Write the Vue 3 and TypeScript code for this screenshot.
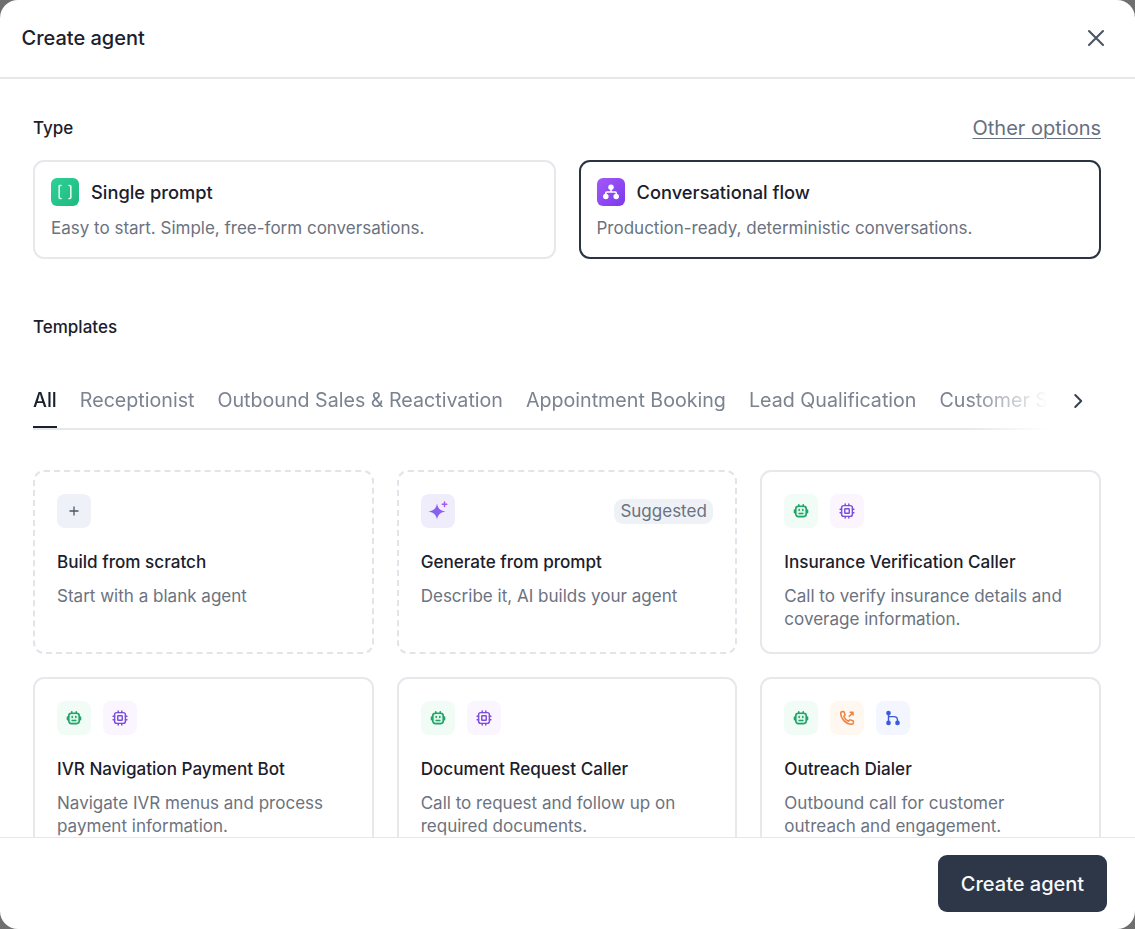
<script setup lang="ts">
type IconName = "plus" | "spark" | "bot" | "chip" | "phone" | "branch";

interface Template {
  title: string;
  description: string;
  icons: IconName[];
  dashed?: boolean;
  badge?: string;
}

const tabs: string[] = [
  "All",
  "Receptionist",
  "Outbound Sales & Reactivation",
  "Appointment Booking",
  "Lead Qualification",
  "Customer Support",
];

const templates: Template[] = [
  { title: "Build from scratch", description: "Start with a blank agent", icons: ["plus"], dashed: true },
  { title: "Generate from prompt", description: "Describe it, AI builds your agent", icons: ["spark"], dashed: true, badge: "Suggested" },
  { title: "Insurance Verification Caller", description: "Call to verify insurance details and coverage information.", icons: ["bot", "chip"] },
  { title: "IVR Navigation Payment Bot", description: "Navigate IVR menus and process payment information.", icons: ["bot", "chip"] },
  { title: "Document Request Caller", description: "Call to request and follow up on required documents.", icons: ["bot", "chip"] },
  { title: "Outreach Dialer", description: "Outbound call for customer outreach and engagement.", icons: ["bot", "phone", "branch"] },
];
</script>

<template>
  <div class="modal">
    <header class="modal_header">
      <h1>Create agent</h1>
      <svg class="close_icon" viewBox="0 0 24 24" fill="none" stroke="#4b5563" stroke-width="2.1" stroke-linecap="round">
        <path d="M5 5l14 14M19 5L5 19" />
      </svg>
    </header>

    <main class="modal_body">
      <div class="type_head">
        <span class="section_label">Type</span>
        <a class="other_options">Other options</a>
      </div>

      <div class="type_grid">
        <div class="type_card">
          <div class="type_title">
            <span class="type_icon green">
              <svg viewBox="0 0 20 20" fill="none" stroke="#e6fbf3" stroke-width="1.4" stroke-linecap="round" stroke-linejoin="round">
                <path d="M6.4 4H5.600q-.9 0-.9.9v10.200q0 .9.9.9h.8M13.600 4h.8q.9 0 .9.9v10.200q0 .9-.9.9h-.8" />
              </svg>
            </span>
            Single prompt
          </div>
          <p>Easy to start. Simple, free-form conversations.</p>
        </div>
        <div class="type_card selected">
          <div class="type_title">
            <span class="type_icon purple">
              <svg viewBox="0 0 20 20" fill="#ffffff" stroke="none">
                <circle cx="10" cy="5.600" r="2.500" />
                <circle cx="5.300" cy="14.200" r="2.500" />
                <circle cx="14.700" cy="14.200" r="2.500" />
                <path d="M9.300 7h1.400v2.400h3.100a1.700 1.700 0 0 1 1.700 1.700V13h-1.400v-1.900a.4.4 0 0 0-.4-.4H6.300a.4.4 0 0 0-.4.4V13H4.500v-1.900a1.700 1.700 0 0 1 1.700-1.700h3.100z" />
              </svg>
            </span>
            Conversational flow
          </div>
          <p>Production-ready, deterministic conversations.</p>
        </div>
      </div>

      <div class="section_label templates_label">Templates</div>

      <div class="tabs_row">
        <div class="tabs">
          <span v-for="(tab, i) in tabs" :key="tab" class="tab" :class="{ active: i === 0 }">{{ tab }}</span>
        </div>
        <svg class="tabs_arrow" viewBox="0 0 24 24" fill="none" stroke="#374151" stroke-width="2.200" stroke-linecap="round" stroke-linejoin="round">
          <path d="M9 5.500l6.500 6.500L9 18.500" />
        </svg>
      </div>

      <div class="template_grid">
        <div v-for="item in templates" :key="item.title" class="template_card" :class="{ dashed: item.dashed }">
          <div class="template_top">
            <span v-for="icon in item.icons" :key="icon" class="tile" :class="`tile_${icon}`">
              <svg v-if="icon === 'plus'" viewBox="0 0 20 20" fill="none" stroke="#4b5563" stroke-width="1.400" stroke-linecap="round">
                <path d="M10 5.500v9M5.500 10h9" />
              </svg>
              <svg v-else-if="icon === 'spark'" class="big" viewBox="0 0 24 24">
                <defs>
                  <linearGradient id="spark_fill" x1="0" y1="1" x2="1" y2="0">
                    <stop offset="0" stop-color="#5b6cf0" />
                    <stop offset="1" stop-color="#b455f0" />
                  </linearGradient>
                </defs>
                <path fill="url(#spark_fill)" d="M11 4.500c.9 4.800 2.800 6.800 8.500 8-5.700 1.200-7.600 3.200-8.500 8-.9-4.800-2.800-6.800-8.500-8 5.700-1.200 7.600-3.200 8.500-8z" />
                <path fill="none" stroke="#a855f7" stroke-width="1.500" stroke-linecap="round" d="M18.500 3v4.500M16.300 5.200h4.500" />
              </svg>
              <svg v-else-if="icon === 'bot'" viewBox="0 0 20 20" fill="none" stroke="#22a36b" stroke-width="1.800" stroke-linecap="round" stroke-linejoin="round">
                <rect x="4.200" y="4.700" width="11.600" height="11.500" rx="2.800" fill="#d8f5e4" />
                <path d="M2.800 9v3M17.200 9v3M7.500 3v1.700M12.500 3v1.700M8 12.800h4" />
                <path d="M8 8.500v.8M12 8.500v.8" />
              </svg>
              <svg v-else-if="icon === 'chip'" viewBox="0 0 20 20" fill="none" stroke="#7c4ddb" stroke-width="1.600" stroke-linecap="round" stroke-linejoin="round">
                <rect x="4" y="4" width="12" height="12" rx="2.400" />
                <rect x="7.500" y="7.500" width="5" height="5" rx=".6" />
                <path d="M8 2.300v1.700M12 2.300v1.700M8 16v1.700M12 16v1.700M2.300 8H4M2.300 12H4M16 8h1.700M16 12h1.700" />
              </svg>
              <svg v-else-if="icon === 'phone'" viewBox="0 0 20 20" fill="none" stroke="#ef8445" stroke-width="1.700" stroke-linecap="round" stroke-linejoin="round">
                <path d="M3 4.500c0-.9.700-1.600 1.600-1.600h1.500c.4 0 .7.300.8.600l.9 2.800c.1.300 0 .6-.2.800L6.400 8.300c.9 2.300 2.900 4.300 5.300 5.300l1.200-1.300c.2-.2.500-.3.800-.2l2.800.9c.3.100.6.400.6.800v1.500c0 .9-.7 1.600-1.600 1.600C8.900 17 3 11 3 4.500z" />
                <path d="M12.500 8l4-4M13.500 3.500h3.200v3.200" />
              </svg>
              <svg v-else viewBox="0 0 20 20" fill="none" stroke="#3b5bdb" stroke-width="1.600" stroke-linecap="round" stroke-linejoin="round">
                <circle cx="5" cy="4.500" r="1.800" fill="#3b5bdb" />
                <circle cx="5" cy="15.500" r="1.800" fill="#3b5bdb" />
                <circle cx="15" cy="15.500" r="1.800" fill="#3b5bdb" />
                <path d="M5 6v8M5 8.500h6c2.200 0 4 1.600 4 4v1.500" />
              </svg>
            </span>
            <span v-if="item.badge" class="badge">{{ item.badge }}</span>
          </div>
          <h3>{{ item.title }}</h3>
          <p>{{ item.description }}</p>
        </div>
      </div>
    </main>

    <footer class="modal_footer">
      <button class="create_button">Create agent</button>
    </footer>
  </div>
</template>

<style>
body {
  background: #6f6f6f;
  overflow: hidden;
}
</style>

<style scoped>
.modal {
  display: flex;
  flex-direction: column;
  height: 929px;
  background: #ffffff;
  border-radius: 18px;
  overflow: hidden;
  font-family: Inter, "Noto Sans", sans-serif;
  color: #1a202c;
}

.modal_header {
  flex: none;
  display: flex;
  justify-content: space-between;
  align-items: center;
  height: 79px;
  box-sizing: border-box;
  padding: 0 27px 1px 21.500px;
  border-bottom: 2px solid #e5e7eb;
}

.modal_header h1 {
  margin: 0;
  font-size: 20px;
  font-weight: 450;
}

.close_icon {
  width: 24px;
  height: 24px;
}

.modal_body {
  flex: 1;
  min-height: 0;
  overflow: hidden;
  padding: 36px 34px 0 33px;
}

.type_head {
  display: flex;
  justify-content: space-between;
  align-items: center;
  height: 26px;
  margin-bottom: 19px;
}

.section_label {
  font-size: 17px;
  font-weight: 450;
}

.other_options {
  font-size: 20px;
  color: #667080;
  text-decoration: underline;
  text-decoration-thickness: 1px;
  text-underline-offset: 3px;
}

.type_grid {
  display: grid;
  grid-template-columns: 1fr 1fr;
  gap: 23px;
}

.type_card {
  height: 99px;
  box-sizing: border-box;
  padding: 16px;
  border: 2px solid #e6e8ec;
  border-radius: 11px;
}

.type_card.selected {
  border-color: #2a3340;
}

.type_title {
  display: flex;
  align-items: center;
  gap: 12px;
  height: 28px;
  font-size: 18.300px;
  font-weight: 450;
}

.type_icon {
  display: flex;
  align-items: center;
  justify-content: center;
  width: 28px;
  height: 28px;
  border-radius: 6px;
}

.type_icon svg {
  width: 22px;
  height: 22px;
}

.type_icon.green {
  background: linear-gradient(135deg, #2dd196, #1fb981);
}

.type_icon.purple {
  background: linear-gradient(135deg, #a259f5, #7c3aed);
}

.type_card p {
  margin: 11px 0 0;
  font-size: 17px;
  line-height: 23px;
  color: #6b7280;
}

.templates_label {
  margin-top: 56px;
  line-height: 24px;
}

.tabs_row {
  display: flex;
  align-items: flex-start;
  margin-top: 46px;
}

.tabs {
  display: flex;
  gap: 23px;
  width: 1015px;
  height: 45px;
  box-sizing: border-box;
  border-bottom: 2px solid #e5e7eb;
  overflow: hidden;
  white-space: nowrap;
  -webkit-mask-image: linear-gradient(to right, #000 92%, transparent 100%);
  mask-image: linear-gradient(to right, #000 92%, transparent 100%);
}

.tab {
  flex: none;
  height: 43px;
  box-sizing: border-box;
  padding-top: 1px;
  font-size: 19.650px;
  line-height: 28px;
  color: #7b8390;
}

.tab.active {
  color: #1a202c;
  font-weight: 450;
  border-bottom: 2px solid #1a202c;
}

.tabs_arrow {
  width: 22px;
  height: 22px;
  margin: 5px 0 0 19px;
}

.template_grid {
  display: grid;
  grid-template-columns: repeat(3, 1fr);
  grid-auto-rows: 184px;
  gap: 23px;
  margin-top: 40px;
}

.template_card {
  box-sizing: border-box;
  padding: 22px 22px 0;
  border: 2px solid #e6e8ec;
  border-radius: 11px;
}

.template_card.dashed {
  border: 2px dashed #e2e4e9;
}

.template_top {
  display: flex;
  align-items: center;
  gap: 12px;
  height: 34px;
}

.tile {
  display: flex;
  align-items: center;
  justify-content: center;
  width: 34px;
  height: 34px;
  border-radius: 8px;
}

.tile svg {
  width: 18px;
  height: 18px;
}

.tile svg.big {
  width: 24px;
  height: 24px;
}

.tile_plus { background: #eef1f8; }
.tile_spark { background: #efedfb; }
.tile_bot { background: #f2fcf6; }
.tile_chip { background: #faf5ff; }
.tile_phone { background: #fff8f1; }
.tile_branch { background: #f3f6fe; }

.badge {
  margin-left: auto;
  padding: 0 6.500px;
  height: 25px;
  border-radius: 9px;
  background: #eef1f6;
  color: #6b7280;
  font-size: 17px;
  line-height: 25px;
}

.template_card h3 {
  margin: 22px 0 0;
  font-size: 17.100px;
  line-height: 24px;
  font-weight: 450;
}

.template_card p {
  margin: 11px 0 0;
  font-size: 17.050px;
  line-height: 22.750px;
  color: #6b7280;
}

.modal_footer {
  flex: none;
  display: flex;
  justify-content: flex-end;
  align-items: flex-start;
  height: 92px;
  box-sizing: border-box;
  padding: 17px 28px 0 0;
  border-top: 1px solid #e5e7eb;
}

.create_button {
  width: 169px;
  height: 57px;
  border: none;
  border-radius: 9px;
  background: #2d3748;
  color: #f7f9fb;
  font-family: inherit;
  font-size: 20px;
  font-weight: 450;
}
</style>
